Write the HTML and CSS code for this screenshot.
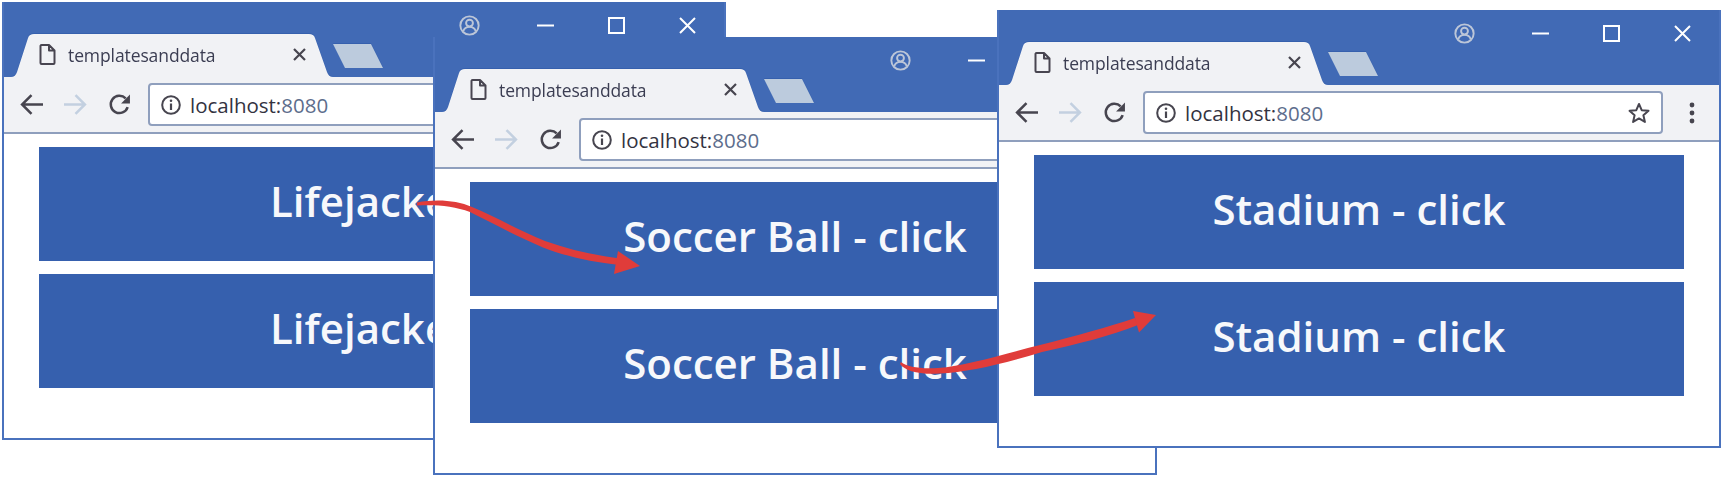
FILE: index.html

```html
<!DOCTYPE html>
<html>
  <head>
    <title>templatesanddata</title>
    <link rel="stylesheet" href="styles.css">
  </head>
  <body>
    <!-- shared icons -->
    <svg class="icon-defs" width="0" height="0">
      <defs>
        <symbol id="i-avatar" viewBox="0 0 22 22">
          <circle cx="11" cy="11" r="9.6" fill="none" stroke="currentColor" stroke-width="2"/>
          <circle cx="11" cy="8.5" r="3.6" fill="none" stroke="currentColor" stroke-width="2"/>
          <path d="M4.5 17c1-3.4 3.6-4.6 6.5-4.6s5.500 1.200 6.500 4.600" fill="none" stroke="currentColor" stroke-width="2"/>
        </symbol>
        <symbol id="i-min" viewBox="0 0 17 17">
          <path d="M0 8.500h17" stroke="currentColor" stroke-width="2"/>
        </symbol>
        <symbol id="i-max" viewBox="0 0 17 17">
          <rect x="1" y="1" width="15" height="15" fill="none" stroke="currentColor" stroke-width="2"/>
        </symbol>
        <symbol id="i-close" viewBox="0 0 17 17">
          <path d="M1 1l15 15M16 1L1 16" stroke="currentColor" stroke-width="2"/>
        </symbol>
        <symbol id="i-file" viewBox="0 0 17 21">
          <path d="M2.500 1h7.500l5.500 5.500v12.500a1 1 0 0 1-1 1h-12a1 1 0 0 1-1-1v-17a1 1 0 0 1 1-1zM10 1v5.500h5.500" fill="none" stroke="currentColor" stroke-width="2" stroke-linejoin="round"/>
        </symbol>
        <symbol id="i-tabx" viewBox="0 0 13 13">
          <path d="M1 1l11 11M12 1L1 12" stroke="currentColor" stroke-width="2.200"/>
        </symbol>
        <symbol id="i-arrow" viewBox="0 0 22 20">
          <path d="M22 10H2.500M11 1l-9 9 9 9" fill="none" stroke="currentColor" stroke-width="2.400"/>
        </symbol>
        <symbol id="i-reload" viewBox="0 0 22 22">
          <path d="M18.800 13.500a8.300 8.300 0 1 1-1.900-8.400" fill="none" stroke="currentColor" stroke-width="2.400"/>
          <path d="M21 1.500v8.500h-8.500z" fill="currentColor"/>
        </symbol>
        <symbol id="i-info" viewBox="0 0 20 20">
          <circle cx="10" cy="10" r="8.800" fill="none" stroke="currentColor" stroke-width="2"/>
          <path d="M10 8.500v6.500" stroke="currentColor" stroke-width="2.200"/>
          <circle cx="10" cy="5.800" r="1.300" fill="currentColor"/>
        </symbol>
        <symbol id="i-star" viewBox="0 0 22 22">
          <path d="M11 2l2.700 6.200 6.800.6-5.100 4.500 1.500 6.600L11 16.400l-5.900 3.500 1.500-6.600L1.500 8.800l6.800-.6z" fill="none" stroke="currentColor" stroke-width="2" stroke-linejoin="round"/>
        </symbol>
        <symbol id="i-dots" viewBox="0 0 6 22">
          <circle cx="3" cy="3" r="2.400" fill="currentColor"/>
          <circle cx="3" cy="11" r="2.400" fill="currentColor"/>
          <circle cx="3" cy="19" r="2.400" fill="currentColor"/>
        </symbol>
      </defs>
    </svg>

    <div class="window win-one">
      <div class="titlebar">
        <div class="tabs">
          <div class="tab">
            <svg class="ic-file"><use href="#i-file"/></svg>
            <span class="tab-title">templatesanddata</span>
            <svg class="ic-tabx"><use href="#i-tabx"/></svg>
          </div>
          <div class="new-tab"></div>
        </div>
        <div class="controls">
          <svg class="ic-avatar"><use href="#i-avatar"/></svg>
          <svg class="ic-ctl"><use href="#i-min"/></svg>
          <svg class="ic-ctl"><use href="#i-max"/></svg>
          <svg class="ic-ctl"><use href="#i-close"/></svg>
        </div>
      </div>
      <div class="toolbar">
        <svg class="ic-nav"><use href="#i-arrow"/></svg>
        <svg class="ic-nav ic-forward"><use href="#i-arrow"/></svg>
        <svg class="ic-reload"><use href="#i-reload"/></svg>
        <div class="address">
          <svg class="ic-info"><use href="#i-info"/></svg>
          <span class="url">localhost:<span class="port">8080</span></span>
          <svg class="ic-star"><use href="#i-star"/></svg>
        </div>
        <svg class="ic-dots"><use href="#i-dots"/></svg>
      </div>
      <div class="content">
        <div class="product product-off">Lifejacket - click</div>
        <div class="product product-off">Lifejacket - click</div>
      </div>
    </div>

    <div class="window win-two">
      <div class="titlebar">
        <div class="tabs">
          <div class="tab">
            <svg class="ic-file"><use href="#i-file"/></svg>
            <span class="tab-title">templatesanddata</span>
            <svg class="ic-tabx"><use href="#i-tabx"/></svg>
          </div>
          <div class="new-tab"></div>
        </div>
        <div class="controls">
          <svg class="ic-avatar"><use href="#i-avatar"/></svg>
          <svg class="ic-ctl"><use href="#i-min"/></svg>
          <svg class="ic-ctl"><use href="#i-max"/></svg>
          <svg class="ic-ctl"><use href="#i-close"/></svg>
        </div>
      </div>
      <div class="toolbar">
        <svg class="ic-nav"><use href="#i-arrow"/></svg>
        <svg class="ic-nav ic-forward"><use href="#i-arrow"/></svg>
        <svg class="ic-reload"><use href="#i-reload"/></svg>
        <div class="address">
          <svg class="ic-info"><use href="#i-info"/></svg>
          <span class="url">localhost:<span class="port">8080</span></span>
          <svg class="ic-star"><use href="#i-star"/></svg>
        </div>
        <svg class="ic-dots"><use href="#i-dots"/></svg>
      </div>
      <div class="content">
        <div class="product">Soccer Ball - click</div>
        <div class="product">Soccer Ball - click</div>
      </div>
    </div>

    <div class="window win-three">
      <div class="titlebar">
        <div class="tabs">
          <div class="tab">
            <svg class="ic-file"><use href="#i-file"/></svg>
            <span class="tab-title">templatesanddata</span>
            <svg class="ic-tabx"><use href="#i-tabx"/></svg>
          </div>
          <div class="new-tab"></div>
        </div>
        <div class="controls">
          <svg class="ic-avatar"><use href="#i-avatar"/></svg>
          <svg class="ic-ctl"><use href="#i-min"/></svg>
          <svg class="ic-ctl"><use href="#i-max"/></svg>
          <svg class="ic-ctl"><use href="#i-close"/></svg>
        </div>
      </div>
      <div class="toolbar">
        <svg class="ic-nav"><use href="#i-arrow"/></svg>
        <svg class="ic-nav ic-forward"><use href="#i-arrow"/></svg>
        <svg class="ic-reload"><use href="#i-reload"/></svg>
        <div class="address">
          <svg class="ic-info"><use href="#i-info"/></svg>
          <span class="url">localhost:<span class="port">8080</span></span>
          <svg class="ic-star"><use href="#i-star"/></svg>
        </div>
        <svg class="ic-dots"><use href="#i-dots"/></svg>
      </div>
      <div class="content">
        <div class="product">Stadium - click</div>
        <div class="product">Stadium - click</div>
      </div>
    </div>

    <!-- red arrows drawn over the windows -->
    <svg class="arrows" width="1725" height="478" viewBox="0 0 1725 478">
      <path d="M417 202.500C436 199 456 200 472 207C498 218 520 231 545 241C570 250 594 255 620 258.500L619 265C592 262 568 257 543 247.500C518 237 496 225 470 212C454 206 436 204.500 417 205.500z"/>
      <path d="M640 266L618 251L614 274z"/>
      <path d="M901 362C907 367 920 369 938 368C965 366 1000 355 1040 345C1075 336 1108 327 1135 318L1138 325C1110 336 1078 344 1042 352C1002 364 968 372 940 373.500C920 375 905 371 900 364z"/>
      <path d="M1156 315L1133 311L1139 332.500z"/>
    </svg>
  </body>
</html>
```

FILE: styles.css

```css
body {
  margin: 0;
  width: 1725px;
  height: 478px;
  overflow: hidden;
  background-color: #ffffff;
  font-family: "Open Sans", "Noto Sans", sans-serif;
}

svg {
  display: block;
  flex: none;
}

.icon-defs {
  position: absolute;
}

/* windows sit on a free canvas and overlap each other */
.window {
  position: absolute;
  box-sizing: border-box;
  width: 724px;
  height: 438px;
  overflow: hidden;
  background-color: #ffffff;
  border: 2px solid #4a72bd;
  border-top: 0;
}

.win-one {
  left: 2px;
  top: 2px;
}

.win-two {
  left: 433px;
  top: 37px;
}

.win-three {
  left: 997px;
  top: 10px;
}

.titlebar {
  display: flex;
  justify-content: space-between;
  height: 75px;
  padding-left: 7px;
  background-color: #416ab5;
}

.tabs {
  display: flex;
  align-items: flex-end;
  filter: drop-shadow(0 -1px 0 #3660ad);
}

.tab {
  display: flex;
  align-items: center;
  box-sizing: border-box;
  width: 322px;
  height: 43px;
  padding: 0 27px 2px 28px;
  background-color: #f1f2f5;
  clip-path: path("M0 43C3 43 5 41 6 38L17 4C18 1 20 0 23 0H298C301 0 303 1 304 4L316 38C317 41 319 43 322 43z");
}

.ic-file {
  width: 17px;
  height: 21px;
  color: #484550;
}

.tab-title {
  margin-left: 12px;
  font-size: 17.500px;
  letter-spacing: -0.1px;
  color: #3b3d52;
}

.ic-tabx {
  width: 13px;
  height: 13px;
  margin-left: auto;
  color: #47454f;
}

.new-tab {
  width: 50px;
  height: 24px;
  margin-bottom: 9px;
  background-color: #bccbdd;
  clip-path: polygon(0 0, 38px 0, 100% 100%, 12px 100%);
}

.controls {
  display: flex;
  align-items: center;
  gap: 54px;
  height: 47px;
  padding-right: 28px;
  color: #ffffff;
}

.ic-avatar {
  width: 21px;
  height: 21px;
  margin-right: 3px;
  color: #bcc6d8;
}

.ic-ctl {
  width: 17px;
  height: 17px;
}

.toolbar {
  display: flex;
  align-items: center;
  padding: 6px 0 6px 16px;
  background-color: #f1f2f5;
  border-bottom: 2px solid #8f9fbd;
}

.ic-nav {
  width: 23px;
  height: 21px;
  margin-right: 21px;
  color: #47454f;
}

.ic-forward {
  transform: scaleX(-1);
  color: #c3d0e0;
}

.ic-reload {
  width: 23px;
  height: 23px;
  color: #47454f;
}

.address {
  display: flex;
  align-items: center;
  box-sizing: border-box;
  width: 520px;
  height: 43px;
  margin-left: 17px;
  padding: 0 11px;
  background-color: #ffffff;
  border: 2px solid #8f9fbd;
  border-radius: 4px;
}

.ic-info {
  width: 20px;
  height: 20px;
  color: #47454f;
}

.url {
  margin-left: 9px;
  font-size: 20.500px;
  color: #33333f;
}

.port {
  color: #5d6d8c;
}

.ic-star {
  width: 22px;
  height: 22px;
  margin-left: auto;
  color: #47454f;
}

.ic-dots {
  width: 6px;
  height: 22px;
  margin-left: 26px;
  color: #47454f;
}

.content {
  display: flex;
  flex-direction: column;
  gap: 13px;
  padding: 13px 35px 0;
}

.product {
  display: flex;
  align-items: center;
  justify-content: center;
  box-sizing: border-box;
  height: 114px;
  padding-bottom: 7px;
  background-color: #3660ae;
  color: #f7f8fb;
  font-size: 42px;
  font-weight: 600;
  white-space: nowrap;
}

/* this label starts right of centre in the reference */
.product-off {
  justify-content: flex-start;
  padding-left: 231px;
}

.arrows {
  position: absolute;
  left: 0;
  top: 0;
}

.arrows path {
  fill: #e03c3a;
}
```
